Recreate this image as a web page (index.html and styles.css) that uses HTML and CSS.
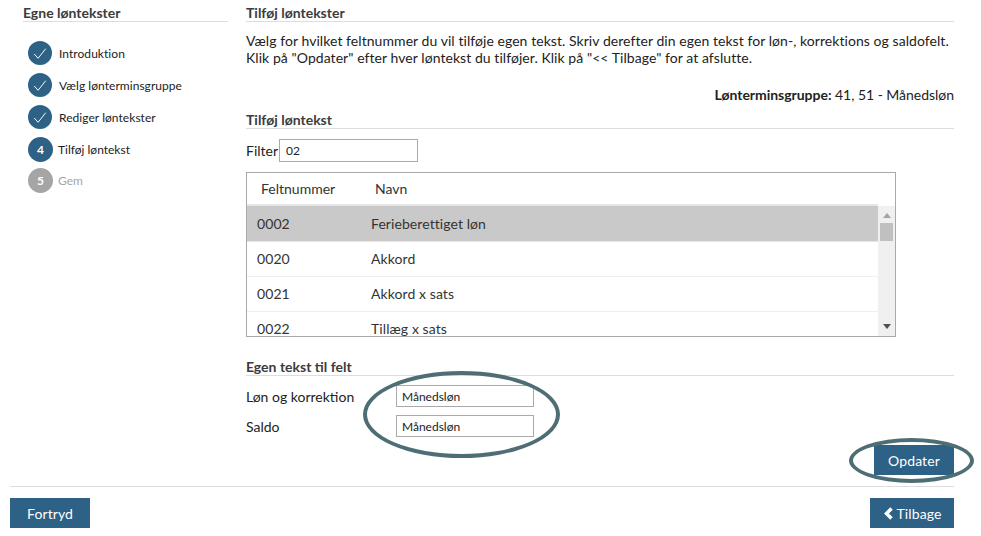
FILE: index.html
```html
<!DOCTYPE html>
<html lang="da">
<head>
<meta charset="utf-8">
<title>Egne løntekster</title>
<link rel="stylesheet" href="styles.css">
</head>
<body>
<div class="page">
  <div class="top">
    <aside class="side">
      <h2 class="head">Egne løntekster</h2>
      <ol class="steps">
        <li class="step"><span class="dot"><svg width="25" height="25" viewBox="0 0 25 25"><path d="M6.5 13l4 4.500L18.500 7.500" fill="none" stroke="#fff" stroke-width="1"/></svg></span>Introduktion</li>
        <li class="step"><span class="dot"><svg width="25" height="25" viewBox="0 0 25 25"><path d="M6.5 13l4 4.500L18.500 7.500" fill="none" stroke="#fff" stroke-width="1"/></svg></span>Vælg lønterminsgruppe</li>
        <li class="step"><span class="dot"><svg width="25" height="25" viewBox="0 0 25 25"><path d="M6.500 13l4 4.500L18.500 7.500" fill="none" stroke="#fff" stroke-width="1"/></svg></span>Rediger løntekster</li>
        <li class="step current"><span class="dot num">4</span>Tilføj løntekst</li>
        <li class="step todo"><span class="dot num">5</span>Gem</li>
      </ol>
    </aside>
    <main class="main">
      <h2 class="head">Tilføj løntekster</h2>
      <p class="intro">Vælg for hvilket feltnummer du vil tilføje egen tekst. Skriv derefter din egen tekst for løn-, korrektions og saldofelt. Klik på "Opdater" efter hver løntekst du tilføjer. Klik på "&lt;&lt; Tilbage" for at afslutte.</p>
      <p class="group"><b>Lønterminsgruppe:</b> 41, 51 - Månedsløn</p>
      <h2 class="head sub">Tilføj løntekst</h2>
      <div class="filter"><label for="f">Filter</label><input id="f" class="inp filter-inp" value="02"></div>
      <div class="table">
        <div class="thead"><span class="c1">Feltnummer</span><span>Navn</span></div>
        <div class="tbody">
          <div class="rows">
            <div class="row sel"><span class="c1">0002</span><span>Ferieberettiget løn</span></div>
            <div class="row"><span class="c1">0020</span><span>Akkord</span></div>
            <div class="row"><span class="c1">0021</span><span>Akkord x sats</span></div>
            <div class="row"><span class="c1">0022</span><span>Tillæg x sats</span></div>
          </div>
          <div class="sbar">
            <span class="arr up"></span>
            <span class="thumb"></span>
            <span class="arr down"></span>
          </div>
        </div>
      </div>
      <h2 class="head sub2">Egen tekst til felt</h2>
      <div class="field"><label>Løn og korrektion</label><input class="inp name-inp" value="Månedsløn"></div>
      <div class="field"><label>Saldo</label><input class="inp name-inp" value="Månedsløn"></div>
      <div class="actions"><button class="btn upd">Opdater</button></div>
    </main>
  </div>
  <footer class="foot">
    <button class="btn cancel">Fortryd</button>
    <button class="btn back"><svg width="12" height="13" viewBox="0 0 12 13"><path d="M8.500 1.500L3.500 6.500 8.500 11.500" fill="none" stroke="#fff" stroke-width="3.500"/></svg>Tilbage</button>
  </footer>
  <span class="ring ring-fields"></span>
  <span class="ring ring-btn"></span>
</div>
</body>
</html>
```
FILE: styles.css
```css
* { box-sizing: border-box; }
html, body { margin: 0; padding: 0; background: #fff; }
body { font-family: Lato, "Open Sans", sans-serif; font-size: 14px; color: #222; overflow: hidden; }
.page { position: relative; width: 981px; height: 536px; }
.top { display: flex; height: 486px; padding: 0 27px 0 23px; gap: 18px; }
.side { width: 205px; flex: none; }
.main { flex: 1; min-width: 0; }
.head { margin: 0; padding-top: 5px; height: 22px; font-size: 14px; line-height: 15px; font-weight: 700; color: #3c3c3c; border-bottom: 1px solid #ddd; }
.steps { list-style: none; margin: 15px 0 0; padding: 0 0 0 5px; }
.step { display: flex; align-items: center; height: 32px; font-size: 12px; letter-spacing: .05px; color: #222; gap: 7px; }
.dot { width: 24px; height: 24px; border-radius: 50%; background: #2e6186; display: flex; align-items: center; justify-content: center; color: #fff; font-weight: 700; font-size: 12px; flex: none; }
.step.current { gap: 5px; letter-spacing: 0; }
.step.current .dot { width: 25px; height: 25px; }
.step.todo { gap: 5px; letter-spacing: 0; color: #a5a5a5; height: 31px; }
.step.todo .dot { width: 25px; height: 25px; background: #a5a5a5; }
.intro { margin: 10px 0 0; font-size: 14px; line-height: 17px; letter-spacing: .06px; color: #222; }
.group { margin: 20px 0 0; text-align: right; font-size: 14px; line-height: 17px; letter-spacing: -.03px; }
.group b { font-weight: 700; }
.sub { margin-top: 4px; }
.filter { display: flex; align-items: center; margin-top: 10px; height: 23px; font-size: 14px; }
.inp { border: 1px solid #aaa; background: #fff; font-family: Lato, sans-serif; font-size: 12px; color: #222; padding: 0 5px; height: 23px; outline: none; }
.filter-inp { width: 139px; margin-left: 1px; padding-left: 6px; }
.table { width: 650px; height: 165px; margin-top: 10px; border: 1px solid #a9a9a9; overflow: hidden; }
.thead { display: flex; height: 31px; align-items: center; padding-left: 14px; font-size: 14px; color: #333; }
.thead .c1 { width: 114px; }
.tbody { display: flex; height: 132px; }
.rows { flex: 1; min-width: 0; overflow: hidden; border-top: 2px solid #e6e6e6; }
.row { display: flex; align-items: center; height: 35px; padding: 0 0 2px 10px; border-bottom: 1px solid #eee; font-size: 14px; letter-spacing: .08px; color: #333; }
.row .c1 { width: 114px; }
.row.sel { background: #c9c9c9; height: 36px; padding-bottom: 1px; border-bottom: 1px solid #e6e6e6; }
.sbar { width: 17px; flex: none; background: #f0f0f0; display: flex; flex-direction: column; align-items: center; margin-top: 2px; padding: 7px 0 0; }
.arr { width: 0; height: 0; border-left: 4px solid transparent; border-right: 4px solid transparent; }
.arr.up { border-bottom: 5px solid #a3a3a3; }
.arr.down { border-top: 5px solid #505050; margin-top: auto; margin-bottom: 7px; }
.thumb { width: 13px; height: 18px; background: #c0c0c0; margin-top: 5px; }
.sub2 { margin-top: 17px; }
.field { display: flex; align-items: center; height: 30px; font-size: 14px; }
.sub2 + .field { margin-top: 5px; }
.field label { width: 150px; }
.name-inp { width: 138px; height: 22px; }
.actions { display: flex; justify-content: flex-end; margin-top: 4px; }
.btn { border: 0; background: #2e6186; color: #fff; font-family: Lato, sans-serif; font-size: 14px; letter-spacing: .1px; height: 30px; padding: 0; display: inline-flex; align-items: center; justify-content: center; }
.upd { width: 80px; }
.foot { margin: 0 27px 0 10px; border-top: 1px solid #ddd; padding-top: 11px; display: flex; justify-content: space-between; }
.cancel { width: 80px; }
.back { width: 84px; gap: 2px; }
.ring { position: absolute; border: 4px solid #4f6d75; border-radius: 50%; pointer-events: none; }
.ring-fields { left: 363px; top: 371px; width: 197px; height: 87px; }
.ring-btn { left: 849px; top: 438px; width: 125px; height: 45px; }
```
